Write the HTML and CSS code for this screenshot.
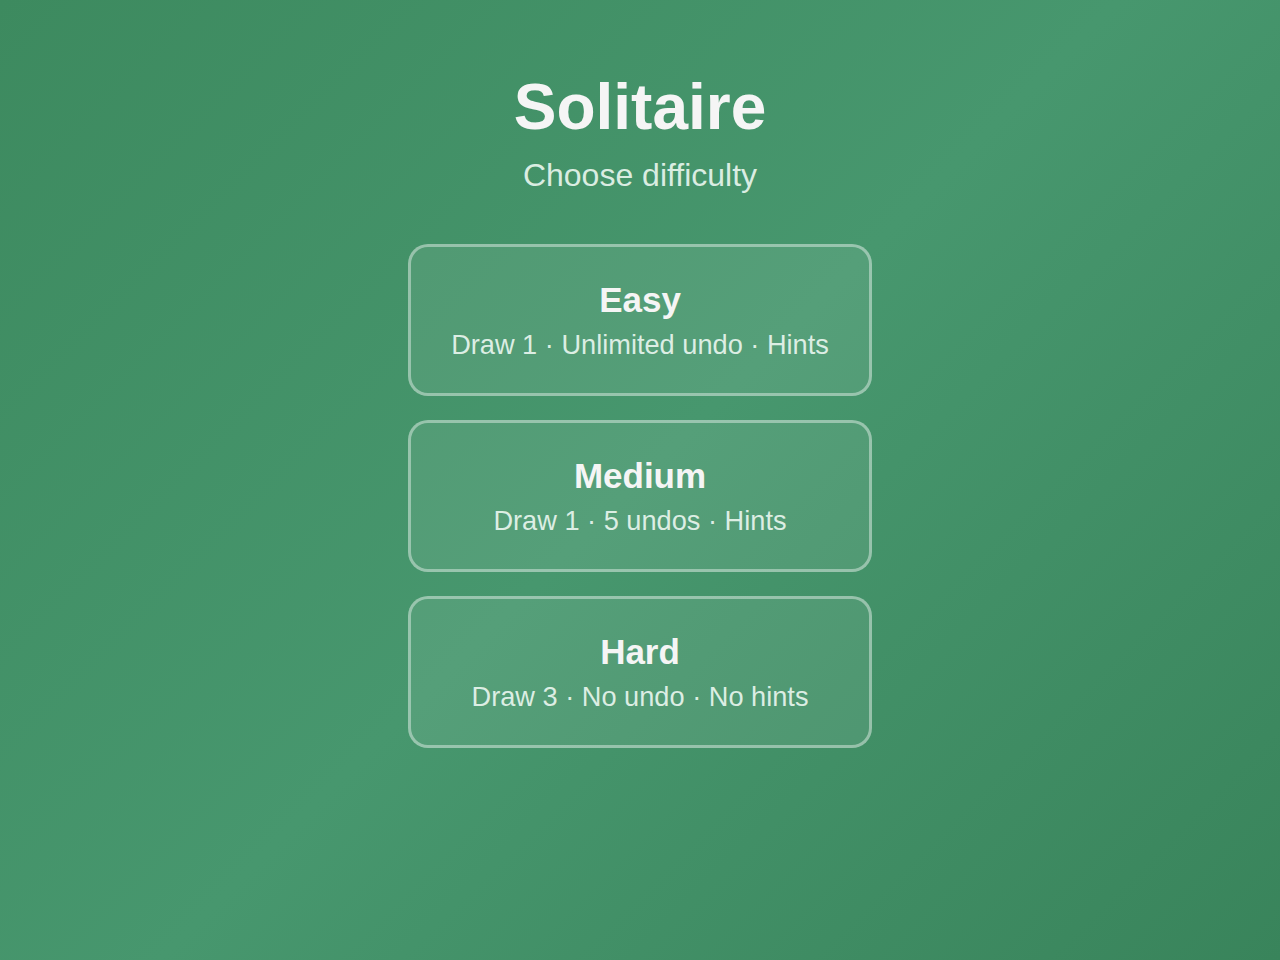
FILE: index.html
```html
<!DOCTYPE html>
<html lang="en">
<head>
    <meta charset="UTF-8">
    <meta name="viewport" content="width=device-width, initial-scale=1.0">
    <title>Solitaire</title>
    <link rel="stylesheet" href="styles.css">
</head>
<body>
    <div class="menu">
        <h1>Solitaire</h1>
        <p class="subtitle">Choose difficulty</p>
        <div class="levels">
            <button class="level" data-level="easy">
                <span class="level-name">Easy</span>
                <span class="level-desc">Draw 1 · Unlimited undo · Hints</span>
            </button>
            <button class="level" data-level="medium">
                <span class="level-name">Medium</span>
                <span class="level-desc">Draw 1 · 5 undos · Hints</span>
            </button>
            <button class="level" data-level="hard">
                <span class="level-name">Hard</span>
                <span class="level-desc">Draw 3 · No undo · No hints</span>
            </button>
        </div>
    </div>
</body>
</html>
```

FILE: styles.css
```css
:root {
    --felt-light: #47976e;
    --text-color: #f5f5f5;
    --subtext-color: rgba(240, 250, 244, 0.88);
    --card-bg: rgba(255, 255, 255, 0.08);
    --card-border: rgba(255, 255, 255, 0.4);
    --font-main: "Liberation Sans", Arial, sans-serif;
}
* { box-sizing: border-box; }
html, body { height: 100%; }
body {
    margin: 0;
    font-family: var(--font-main);
    color: var(--text-color);
    background: linear-gradient(135deg, #3d8a5f 0%, var(--felt-light) 50%, #39845b 100%);
    background-attachment: fixed;
}
.menu {
    display: flex;
    flex-direction: column;
    align-items: center;
    padding-top: 70px;
}
h1 {
    margin: 0 0 13px 0;
    font-size: 64px;
    font-weight: 700;
    color: var(--text-color);
}
.subtitle {
    margin: 0 0 50px 0;
    font-size: 32px;
    color: var(--subtext-color);
}
.levels {
    display: flex;
    flex-direction: column;
    gap: 24px;
}
.level {
    width: 464px;
    height: 152px;
    display: flex;
    flex-direction: column;
    align-items: center;
    gap: 9px;
    padding: 33px 20px 32px;
    background: var(--card-bg);
    border: 3px solid var(--card-border);
    border-radius: 20px;
    font-family: inherit;
    color: inherit;
    cursor: pointer;
}
.level-name {
    font-size: 35px;
    font-weight: 700;
    color: var(--text-color);
}
.level-desc {
    font-size: 27.2px;
    color: var(--subtext-color);
}
```
